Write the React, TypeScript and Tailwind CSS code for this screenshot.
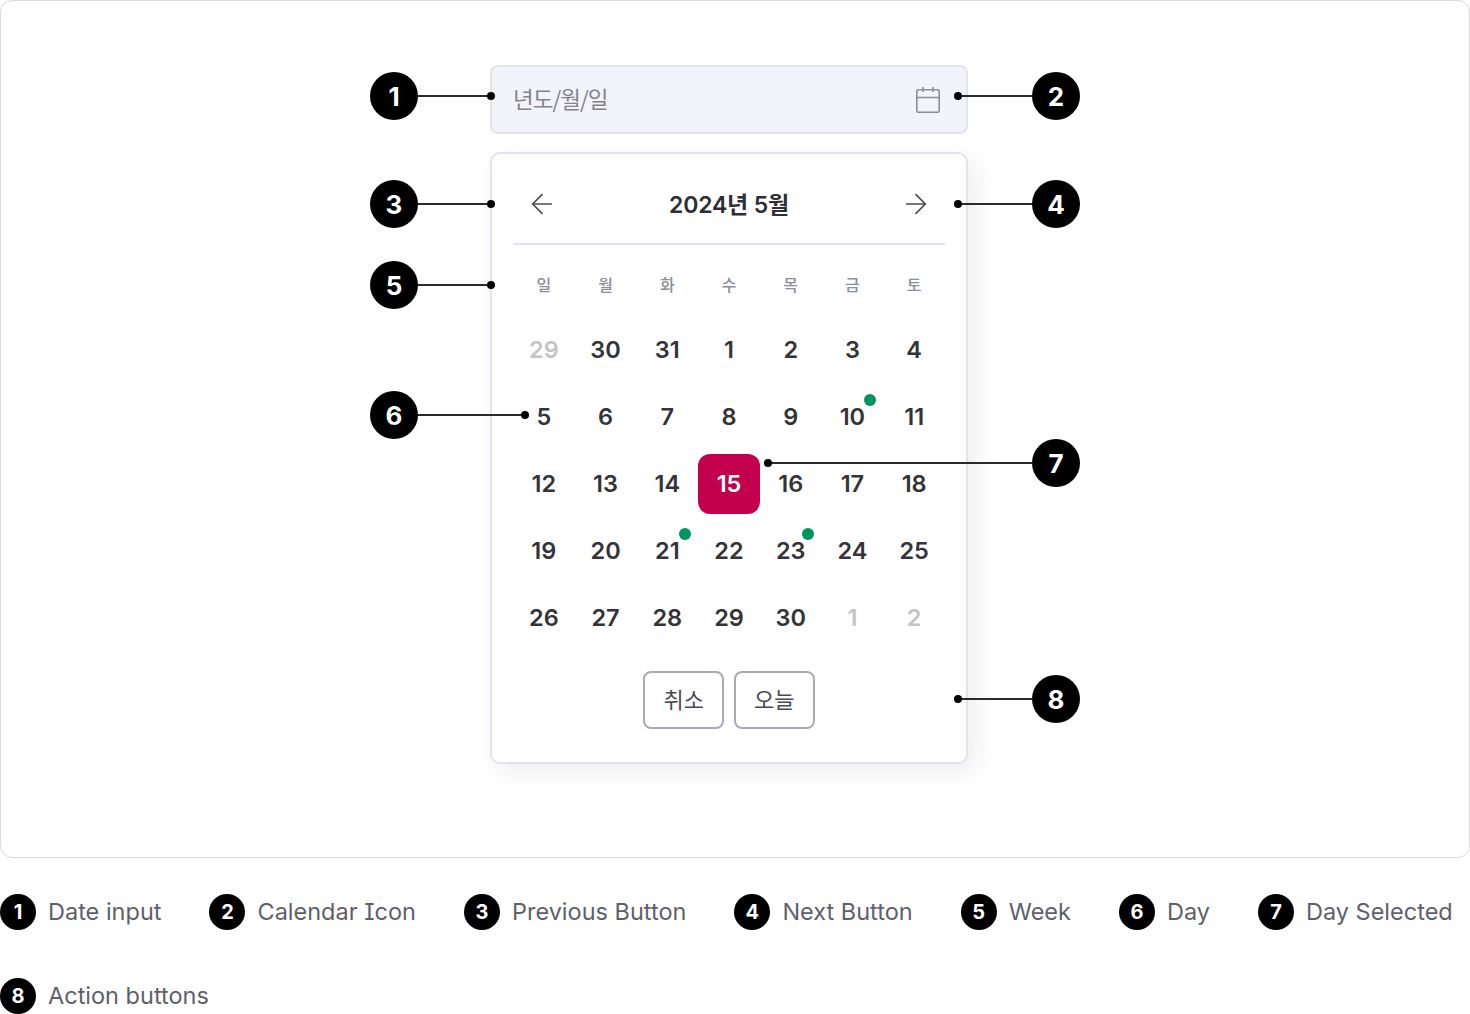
import { ArrowLeft, ArrowRight } from 'lucide-react'

const FONT = "font-['Inter','Noto_Sans_CJK_KR',sans-serif]"

const weekDays = ['일', '월', '화', '수', '목', '금', '토']

// muted = spills over from the neighbouring month, dot = has an event
const days = [
  { n: 29, muted: true }, { n: 30 }, { n: 31 }, { n: 1 }, { n: 2 }, { n: 3 }, { n: 4 },
  { n: 5 }, { n: 6 }, { n: 7 }, { n: 8 }, { n: 9 }, { n: 10, dot: true }, { n: 11 },
  { n: 12 }, { n: 13 }, { n: 14 }, { n: 15, selected: true }, { n: 16 }, { n: 17 }, { n: 18 },
  { n: 19 }, { n: 20 }, { n: 21, dot: true }, { n: 22 }, { n: 23, dot: true }, { n: 24 }, { n: 25 },
  { n: 26 }, { n: 27 }, { n: 28 }, { n: 29 }, { n: 30 }, { n: 1, muted: true }, { n: 2, muted: true },
] as { n: number; muted?: boolean; dot?: boolean; selected?: boolean }[]

const legend = [
  'Date input',
  'Calendar Icon',
  'Previous Button',
  'Next Button',
  'Week',
  'Day',
  'Day Selected',
  'Action buttons',
]

function CalendarGlyph() {
  return (
    <svg width="26" height="28" viewBox="0 0 26 28" fill="none" stroke="#8d8d9b" strokeWidth="1.6">
      <rect x="1.8" y="3.8" width="22.4" height="22.4" rx="2" />
      <path d="M1.8 11.5H24.2M8 1V6M18 1V6" />
    </svg>
  )
}

// one numbered annotation: badge, leader line, end dot. flip puts the badge on the right
function Callout({ n, className, flip }: { n: number; className: string; flip?: boolean }) {
  return (
    <div className={`absolute h-[48px] flex items-center ${flip ? 'flex-row-reverse' : ''} ${className}`}>
      <span className="shrink-0 w-[48px] h-[48px] rounded-full bg-black text-white flex items-center justify-center text-[26px] font-bold">
        {n}
      </span>
      <span className="flex-1 h-[2px] bg-[#2a2a2a]" />
      <span className="shrink-0 w-[8px] h-[8px] rounded-full bg-black" />
    </div>
  )
}

export default function App() {
  return (
    <div className={`${FONT} bg-white w-[1470px] h-[1014px] overflow-hidden`}>
      <div className="relative h-[858px] border border-[#d9d9e6] rounded-[12px]">
        <div className="ml-[489px] pt-[64px] w-[478px]">
          {/* input */}
          <div className="h-[69px] flex items-center justify-between pl-[21px] pr-[25px] bg-[#f3f4f9] border-2 border-[#e3e3ee] rounded-[8px]">
            <span className="text-[22.5px] leading-[30px] mb-[3px] text-[#83838f] font-['Noto_Sans_CJK_KR',sans-serif] tracking-[-1px]">년도/월/일</span>
            <CalendarGlyph />
          </div>

          {/* popup */}
          <div className="mt-[18px] h-[612px] px-[21px] bg-white border-2 border-[#e3e3ee] rounded-[10px] shadow-[8px_8px_24px_rgba(40,40,70,0.08)]">
            <div className="h-[91px] pt-[10px] flex items-center justify-between border-b-2 border-[#e3e3ee]">
              <button className="w-[58px] flex justify-center text-[#4a4a54]">
                <ArrowLeft size={32} strokeWidth={1.25} />
              </button>
              <h2 className="text-[23px] leading-[30px] mt-[2px] font-semibold text-[#2e2e33] tracking-[-0.2px]">2024년 5월</h2>
              <button className="w-[58px] flex justify-center text-[#4a4a54]">
                <ArrowRight size={32} strokeWidth={1.25} />
              </button>
            </div>

            <div className="grid grid-cols-7 h-[40px] mt-[20px] items-center text-center text-[16px] font-medium text-[#8d8d9b]">
              {weekDays.map((d) => (
                <span key={d}>{d}</span>
              ))}
            </div>

            <div className="grid grid-cols-7 gap-y-[7px] mt-[15px]">
              {days.map((d, i) => (
                <div
                  key={i}
                  className={`relative h-[60px] flex items-center justify-center text-[23.5px] font-semibold ${
                    d.selected
                      ? 'bg-[#c2004e] text-white rounded-[12px]'
                      : d.muted
                        ? 'text-[#c4c4c8]'
                        : 'text-[#333338]'
                  }`}
                >
                  {d.n}
                  {d.dot && <span className="absolute left-[42.5px] top-[7px] w-[12px] h-[12px] rounded-full bg-[#00955f]" />}
                </div>
              ))}
            </div>

            <div className="flex justify-center gap-[9.5px] mt-[23px]">
              <button className="w-[81px] h-[58px] border-2 border-[#a9a9b8] rounded-[8px] text-[22px] text-[#4a4a52]">취소</button>
              <button className="w-[81px] h-[58px] border-2 border-[#a9a9b8] rounded-[8px] text-[22px] text-[#4a4a52]">오늘</button>
            </div>
          </div>
        </div>

        <Callout n={1} className="left-[369px] top-[71px] w-[125px]" />
        <Callout n={2} flip className="left-[953px] top-[71px] w-[126px]" />
        <Callout n={3} className="left-[369px] top-[179px] w-[125px]" />
        <Callout n={4} flip className="left-[953px] top-[179px] w-[126px]" />
        <Callout n={5} className="left-[369px] top-[260px] w-[125px]" />
        <Callout n={6} className="left-[369px] top-[390px] w-[159px]" />
        <Callout n={7} flip className="left-[763px] top-[438px] w-[316px]" />
        <Callout n={8} flip className="left-[953px] top-[674px] w-[126px]" />
      </div>

      {/* legend */}
      <div className="flex flex-wrap gap-x-[48px] gap-y-[48px] mt-[36px]">
        {legend.map((label, i) => (
          <div key={label} className="flex items-center gap-[12px] h-[36px]">
            <span className="w-[36px] h-[36px] rounded-full bg-black text-white flex items-center justify-center text-[20px] font-bold">
              {i + 1}
            </span>
            <span className="text-[23.5px] leading-[36px] text-[#5f5f69] [font-feature-settings:'cv08']">{label}</span>
          </div>
        ))}
      </div>
    </div>
  )
}
